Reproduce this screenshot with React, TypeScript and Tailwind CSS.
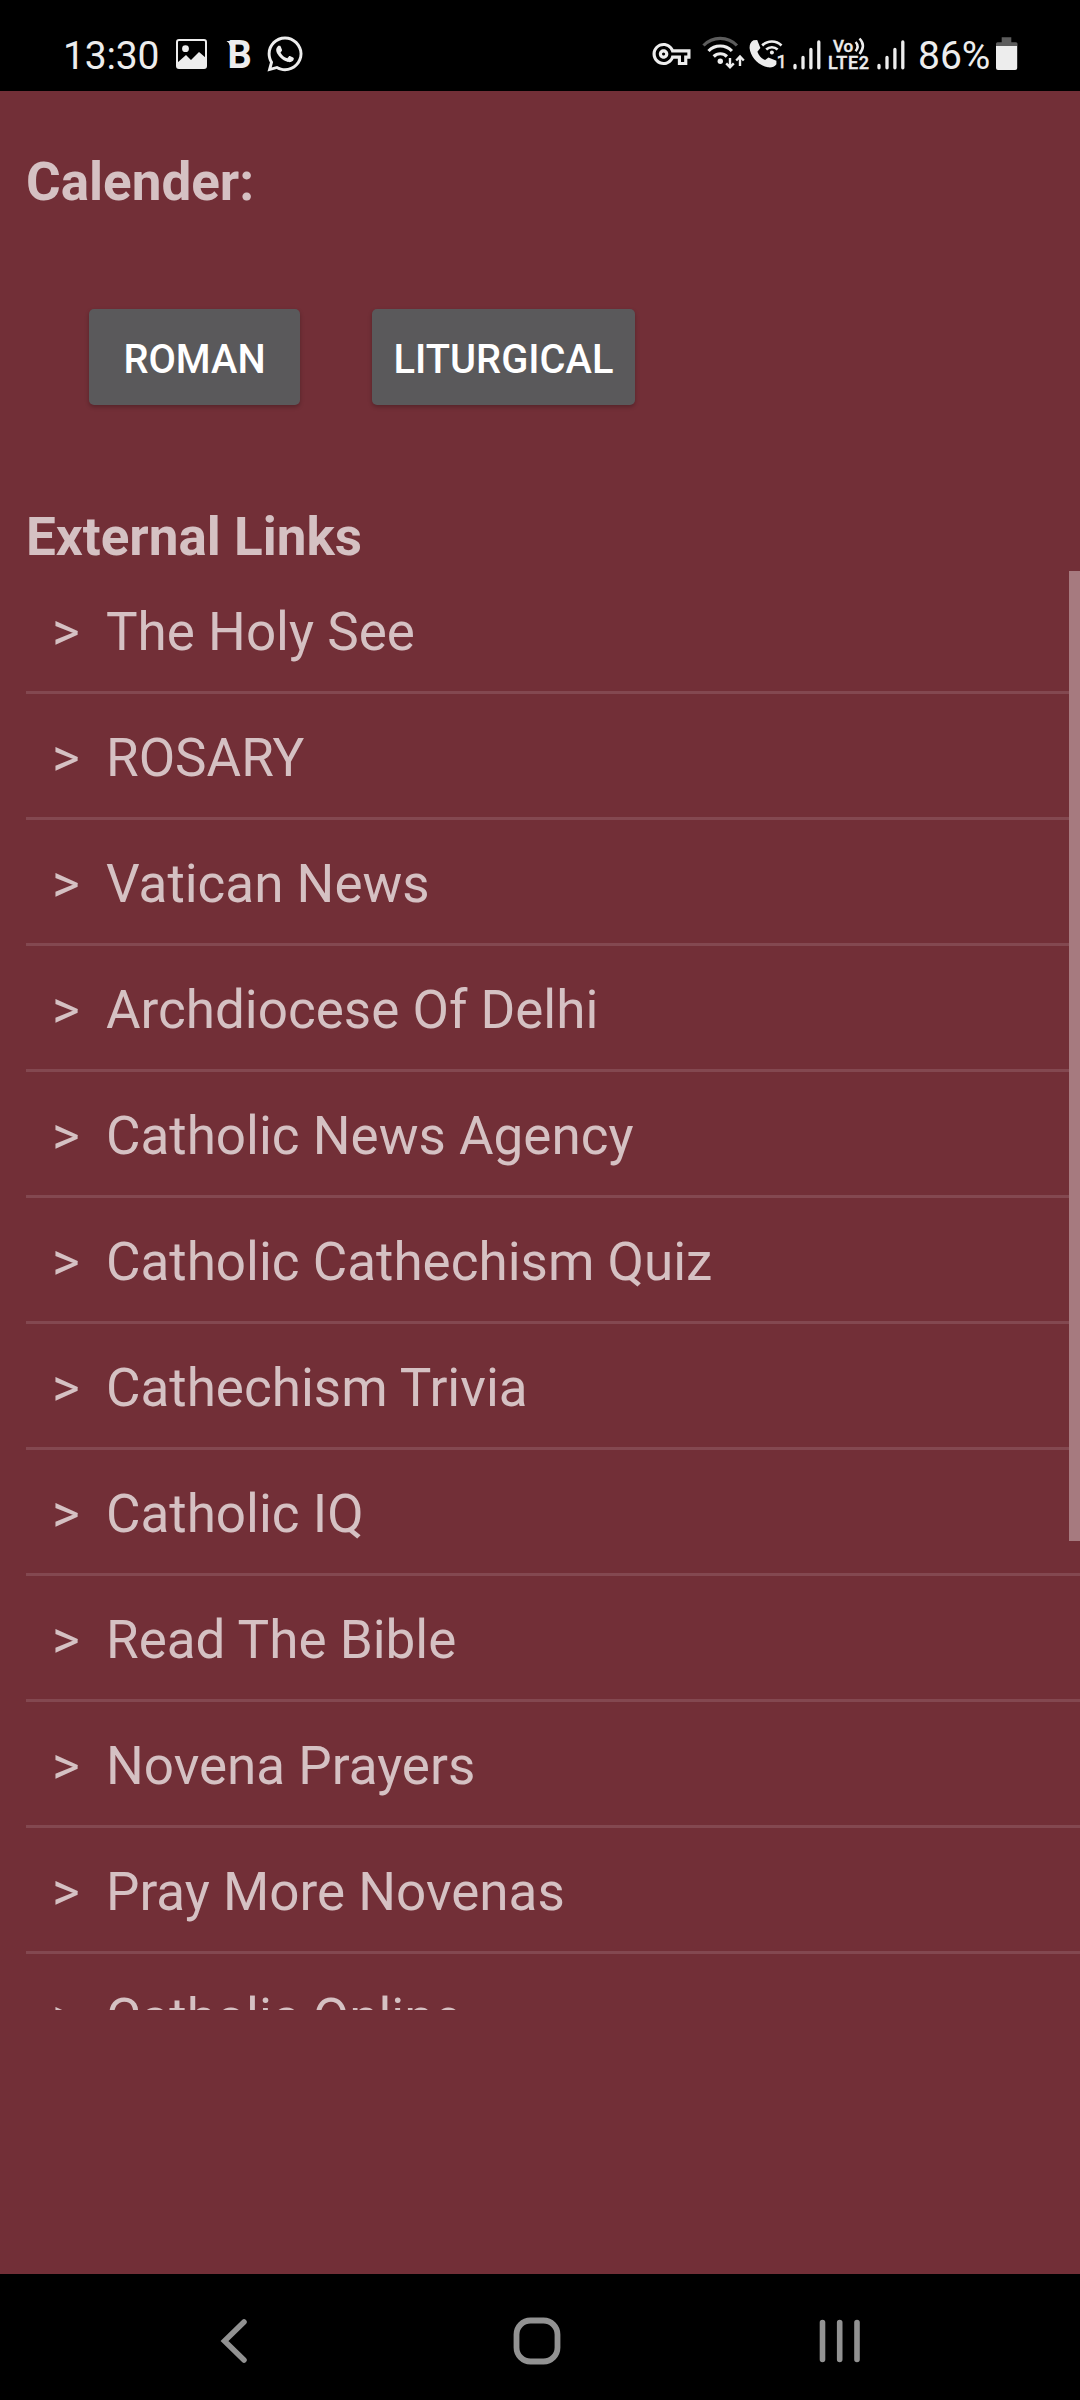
import React from "react";
import { FaWhatsapp } from "react-icons/fa";
import { MdOutlineVpnKey } from "react-icons/md";

const links = [
  "The Holy See",
  "ROSARY",
  "Vatican News",
  "Archdiocese Of Delhi",
  "Catholic News Agency",
  "Catholic Cathechism Quiz",
  "Cathechism Trivia",
  "Catholic IQ",
  "Read The Bible",
  "Novena Prayers",
  "Pray More Novenas",
  "Catholic Online",
];

function ImageIcon() {
  return (
    <svg className="ml-[18px] shrink-0" width="31" height="30" viewBox="0 0 31 30">
      <rect x="1" y="1" width="29" height="28" rx="2" fill="none" stroke="currentColor" strokeWidth="2" />
      <path d="M1 24l9-8 5 5 8-8 7 6v8a2 2 0 0 1-2 2H3a2 2 0 0 1-2-2z" fill="currentColor" />
      <circle cx="9.500" cy="9.700" r="3.400" fill="currentColor" />
    </svg>
  );
}

function SignalBars({ className }: { className: string }) {
  return (
    <svg className={className} width="28" height="30" viewBox="0 0 28 30">
      <g stroke="currentColor" strokeWidth="3.300" strokeLinecap="round">
        <path d="M2 25.500v2.300M10 17.500v10.300M17.900 9.500v18.300M25.800 2v25.800" />
      </g>
    </svg>
  );
}

function WifiIcon() {
  return (
    <svg className="ml-[11px] shrink-0 overflow-visible" width="42" height="34" viewBox="702 36 42 34">
      <g fill="none" stroke="currentColor" strokeWidth="3.200" strokeLinecap="butt">
        <path d="M703.500 45.500a23 23 0 0 1 33.400 0" stroke="#5c5c5c" />
        <path d="M708.500 51a16.200 16.200 0 0 1 23.400 0" />
        <path d="M713.700 56.500a9.300 9.300 0 0 1 13.200 0" />
        <path d="M730 58v9.500M726.200 63.300l3.800 4 3.800-4M740 66v-9.500M736.200 60.500l3.800-4 3.800 4" strokeWidth="2.400" />
      </g>
      <circle cx="720.300" cy="61.300" r="2.700" fill="currentColor" />
    </svg>
  );
}

function WifiCallIcon() {
  return (
    <svg className="ml-[5px] shrink-0 overflow-visible" width="37" height="32" viewBox="749 38 37 32">
      <path
        d="M753.500 40.300l3.700-.3 3.200 8-3 3.700c1.500 4 4.200 6.800 7.700 8.300l3.300-2.600 8 3.300v3.500c-2 2.600-5 3.700-8.400 3.100-9.200-1.500-17.400-10-18.400-19-.2-3.300 1-6.500 3.900-8z"
        fill="currentColor"
      />
      <g fill="none" stroke="currentColor" strokeWidth="2.600">
        <path d="M762.200 45.500a13.500 13.500 0 0 1 19.300 0" />
        <path d="M766.200 49.500a8.200 8.200 0 0 1 11.400 0" />
      </g>
      <circle cx="771.900" cy="52.500" r="2" fill="currentColor" />
      <text x="776.800" y="67.700" fontSize="17.500" fill="currentColor" stroke="currentColor" strokeWidth="0.600">1</text>
    </svg>
  );
}

function VolteIcon() {
  return (
    <svg className="ml-[7px] shrink-0 overflow-visible" width="42" height="34" viewBox="828 36 42 34">
      <text x="833" y="51.700" fontSize="17" fontWeight="500" fill="currentColor" stroke="currentColor" strokeWidth="0.400">Vo</text>
      <g fill="none" stroke="currentColor" strokeWidth="2.500">
        <path d="M855.600 42q4 4.400 0 9.300M859.500 38.500q6.800 7 0 15.500" />
      </g>
      <text x="828" y="69" fontSize="18" fontWeight="500" textLength="41" fill="currentColor" stroke="currentColor" strokeWidth="0.400">LTE2</text>
    </svg>
  );
}

function BatteryIcon() {
  return (
    <svg className="ml-[6px] shrink-0" width="22" height="34" viewBox="996 37 22 34">
      <path d="M1001.700 37.300h9.600v5h4.700a1.500 1.500 0 0 1 1.500 1.500v2.200h-21.500v-2.200a1.500 1.500 0 0 1 1.500-1.500h4.200z" fill="#5c5c5c" />
      <path d="M996 46h21.200v22a2 2 0 0 1-2 2h-17.200a2 2 0 0 1-2-2z" fill="currentColor" />
    </svg>
  );
}

function StatusBar() {
  return (
    <header className="flex h-[91px] items-start justify-between bg-black pl-[63px] pr-[62px] pt-[36px] text-[#ededed]">
      <div className="flex items-start">
        <span className="mt-[-3px] w-[95px] whitespace-nowrap text-[39px] leading-[47px] tracking-[-0.2px]">13:30</span>
        <div className="mt-[3px] flex">
          <ImageIcon />
        </div>
        <svg className="ml-[19px] mt-[4px] overflow-visible" width="25" height="30" viewBox="226 40 25 30">
          <path d="M226.500 41h6v5h-2.500q-.4-3.200-3.500-5z" fill="currentColor" />
          <text x="227.600" y="68" fontSize="38" fontWeight="700" fill="currentColor">B</text>
        </svg>
        <FaWhatsapp className="ml-[14px] mt-[-2px] h-[40px] w-[40px]" />
      </div>
      <div className="flex items-start">
        <MdOutlineVpnKey className="mt-[-1px] h-[38px] w-[39px]" />
        <WifiIcon />
        <div className="mt-[2px] flex">
          <WifiCallIcon />
        </div>
        <SignalBars className="ml-[7px] mt-[4px]" />
        <VolteIcon />
        <SignalBars className="ml-[7px] mt-[4px]" />
        <span className="ml-[13px] mt-[-3px] w-[72px] whitespace-nowrap text-[39px] leading-[47px]">86%</span>
        <div className="mt-px flex">
          <BatteryIcon />
        </div>
      </div>
    </header>
  );
}

function NavBar() {
  return (
    <nav className="flex h-[126px] items-center justify-between bg-black pl-[220px] pr-[219px] pt-[7px] text-[#929292]">
      <svg width="28" height="48" viewBox="0 0 28 48" fill="none" stroke="currentColor" strokeWidth="5.500" strokeLinecap="round">
        <path d="M24 5L4.500 24 24 43" />
      </svg>
      <svg className="ml-[6px]" width="48" height="48" viewBox="0 0 48 48" fill="none" stroke="currentColor" strokeWidth="5.800">
        <rect x="3.500" y="3.500" width="41" height="41" rx="14" />
      </svg>
      <svg width="42" height="48" viewBox="0 0 42 48" stroke="currentColor" strokeWidth="5.600" strokeLinecap="round">
        <path d="M3.500 5.500v37M20.700 5.500v37M38 5.500v37" />
      </svg>
    </nav>
  );
}

function ActionButton({ label, className }: { label: string; className: string }) {
  return (
    <button
      className={`flex h-[96px] items-center justify-center rounded-[5px] bg-[#5a595b] pt-[6px] text-[39.8px] font-medium leading-[46px] text-white shadow-[0_2px_4px_rgba(0,0,0,0.25)] ${className}`}
    >
      {label}
    </button>
  );
}

export default function App() {
  return (
    <div className="flex h-[2400px] w-[1080px] flex-col overflow-hidden bg-[#722f37] font-['Roboto',sans-serif]">
      <StatusBar />
      <main className="flex-1 text-[#d5c1c3]">
        <h1 className="pl-[26px] pt-[60px] text-[53px] font-bold leading-[62px]">Calender:</h1>
        <div className="mt-[96px] flex gap-[72px] pl-[89px]">
          <ActionButton label="ROMAN" className="w-[211px]" />
          <ActionButton label="LITURGICAL" className="w-[263px]" />
        </div>
        <h2 className="pl-[26px] pt-[101px] text-[53px] font-bold leading-[62px]">External Links</h2>
        <div className="relative h-[1442px] overflow-hidden pl-[26px]">
          <ul>
            {links.map((name) => (
              <li key={name} className="flex h-[126px] items-center border-b-[3px] border-[#834850] pt-[4px] text-[53px] leading-[62px]">
                <span className="ml-[26px] w-[54px]">&gt;</span>
                <span className="whitespace-nowrap">{name}</span>
              </li>
            ))}
          </ul>
          <div className="absolute right-0 top-[3px] h-[970px] w-[11px] bg-[#a67a7f]" />
        </div>
      </main>
      <NavBar />
    </div>
  );
}
